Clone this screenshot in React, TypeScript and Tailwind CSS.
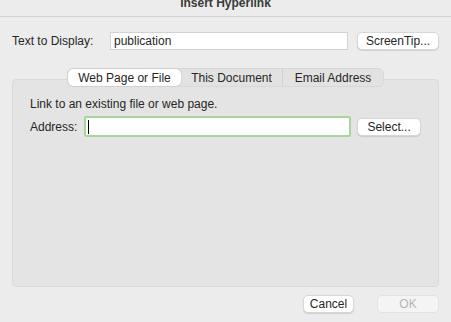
const tabs = [
  { label: "Web Page or File", w: "w-[113px]", active: true },
  { label: "This Document", w: "w-[102px]", active: false },
  { label: "Email Address", w: "w-[100px]", active: false },
];

const btn =
  "h-[18px] rounded-[5px] bg-white border border-[#d6d6d6] shadow-[0_1px_1px_rgba(0,0,0,0.12)] text-[12px] leading-none text-[#262626] flex items-center justify-center";

export default function App() {
  return (
    <div
      className="w-[451px] h-[322px] bg-[#ececec] flex flex-col overflow-hidden text-[#262626]"
      style={{ fontFamily: '"Liberation Sans", Arial, sans-serif' }}
    >
      {/* title bar */}
      <div className="h-[17px] border-b border-[#d4d4d4] overflow-hidden flex justify-center">
        <span className="text-[12px] font-bold leading-[12px] -mt-[3px] text-[#3a3a3a]">
          Insert Hyperlink
        </span>
      </div>

      {/* text to display row */}
      <div className="flex items-center mt-[15px] pl-[12px] pr-[12px]">
        <span className="text-[12px] w-[98px]">Text to Display:</span>
        <div className="w-[238px] h-[18px] bg-white border border-[#d2d2d2] flex items-center pl-[3px] text-[12px]">
          publication
        </div>
        <button className={`${btn} ml-[9px] w-[82px]`}>ScreenTip...</button>
      </div>

      {/* tabs + panel */}
      <div className="flex flex-col mt-[18px] px-[12px]">
        <div className="self-center z-10 flex h-[19px] rounded-[6px] bg-[#e2e2e2] border border-[#d8d8d8] text-[12px]">
          {tabs.map((t, i) => (
            <div
              key={t.label}
              className={`${t.w} flex items-center justify-center ${
                t.active
                  ? "bg-white rounded-[5px] shadow-[0_0_1px_rgba(0,0,0,0.35)]"
                  : i === 1
                  ? "border-r border-[#d0d0d0]"
                  : ""
              }`}
            >
              {t.label}
            </div>
          ))}
        </div>
        <div className="-mt-[8px] h-[208px] bg-[#e4e4e4] border border-[#dadada] rounded-[4px] pt-[17px] px-[17px]">
          <div className="text-[12px] leading-[14px]">Link to an existing file or web page.</div>
          <div className="flex items-center mt-[5px]">
            <span className="text-[12px] w-[54px]">Address:</span>
            <div className="w-[268px] h-[21px] bg-white border-[2px] border-[#a9d59c] rounded-[2px] flex items-center pl-[2px]">
              <div className="w-px h-[14px] bg-black" />
            </div>
            <button className={`${btn} ml-[6px] w-[64px]`}>Select...</button>
          </div>
        </div>
      </div>

      {/* bottom buttons */}
      <div className="flex justify-end items-center mt-[8px] pr-[12px]">
        <button className={`${btn} w-[51px]`}>Cancel</button>
        <button className="ml-[23px] w-[62px] h-[18px] rounded-[5px] bg-[#f4f4f4] border border-[#e2e2e2] text-[12px] leading-none text-[#b4b4b4] flex items-center justify-center">
          OK
        </button>
      </div>
    </div>
  );
}
